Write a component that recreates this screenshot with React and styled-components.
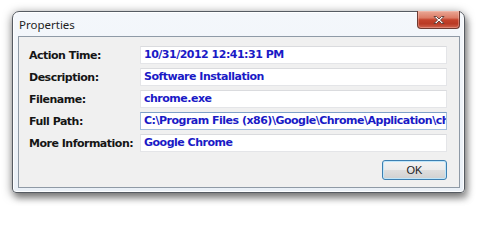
import React from "react";
import styled, { createGlobalStyle } from "styled-components";

const GlobalStyle = createGlobalStyle`
  html, body { margin: 0; padding: 0; background: #ffffff; }
`;

const Page = styled.div`
  width: 480px;
  height: 208px;
  padding: 11px 0 0 12px;
  box-sizing: border-box;
  background: #ffffff;
`;

const Window = styled.div`
  width: 453px;
  height: 182px;
  box-sizing: border-box;
  border: 1px solid #565b62;
  border-radius: 7px 7px 4px 4px;
  background: linear-gradient(#f4f7fb, #eaf0f7);
  box-shadow: inset 0 0 0 1px rgba(255, 255, 255, 0.9),
    0 2px 10px rgba(0, 0, 0, 0.5), 3px 6px 6px rgba(0, 0, 0, 0.25);
  display: flex;
  flex-direction: column;
`;

const TitleBar = styled.div`
  height: 25px;
  display: flex;
  align-items: center;
  padding-left: 6px;
`;

const Title = styled.span`
  flex: 1;
  font-family: "Noto Sans", "Open Sans", sans-serif;
  font-size: 11.5px;
  color: #1e1e1e;
  margin-top: 1px;
`;

const CloseButton = styled.div`
  align-self: flex-start;
  margin-top: -1px;
  margin-right: 4px;
  width: 43px;
  height: 18px;
  box-sizing: border-box;
  border: 1px solid #6e3a31;
  border-top: none;
  border-radius: 0 0 4px 4px;
  background: linear-gradient(
    #eaa896 0%,
    #dc7c66 40%,
    #c4432c 52%,
    #b93a24 75%,
    #d06550 100%
  );
  box-shadow: inset 0 0 0 1px rgba(255, 210, 200, 0.35);
  display: flex;
  align-items: center;
  justify-content: center;
`;

const Client = styled.div`
  flex: 1;
  margin: 0 4px 4px 5px;
  border: 1px solid #8f9aa6;
  background: #f0f0f0;
  padding: 9px 12px 7px 10px;
  display: flex;
  flex-direction: column;
`;

const Form = styled.div`
  display: grid;
  grid-template-columns: 111px 307px;
  grid-auto-rows: 18px;
  row-gap: 4px;
`;

const Label = styled.div`
  align-self: center;
  font-family: "DejaVu Sans", "Liberation Sans", sans-serif;
  font-weight: bold;
  font-size: 11px;
  letter-spacing: -0.5px;
  color: #151515;
  white-space: nowrap;
`;

const Field = styled.div`
  box-sizing: border-box;
  height: 18px;
  background: #ffffff;
  border: 1px solid ${(p) => (p.$focused ? "#a4bfdc" : "#e4e5e8")};
  border-top-color: ${(p) => (p.$focused ? "#7fa0c6" : "#dadbde")};
  padding: 0 3px;
  font-family: "DejaVu Sans", "Liberation Sans", sans-serif;
  font-weight: bold;
  font-size: 11px;
  letter-spacing: -0.5px;
  line-height: 16px;
  color: #1a1ac6;
  white-space: nowrap;
  overflow: hidden;
`;

const Footer = styled.div`
  margin-top: 8px;
  display: flex;
  justify-content: flex-end;
`;

const OkButton = styled.div`
  width: 65px;
  height: 20px;
  box-sizing: border-box;
  border: 1px solid #3c7fb1;
  border-radius: 3px;
  background: linear-gradient(#f3f3f3 0%, #ececec 48%, #dedede 52%, #d0d0d0 100%);
  box-shadow: inset 0 0 0 1px #bfe6fa;
  display: flex;
  align-items: center;
  justify-content: center;
  font-family: "Liberation Sans", "DejaVu Sans", sans-serif;
  font-size: 11px;
  color: #222;
`;

const rows = [
  { label: "Action Time:", value: "10/31/2012 12:41:31 PM" },
  { label: "Description:", value: "Software Installation" },
  { label: "Filename:", value: "chrome.exe" },
  {
    label: "Full Path:",
    value: "C:\\Program Files (x86)\\Google\\Chrome\\Application\\chrome.exe",
    focused: true,
  },
  { label: "More Information:", value: "Google Chrome" },
];

function CloseIcon() {
  return (
    <svg width="12" height="10" viewBox="0 0 12 10">
      <path
        d="M1 1.5 L3.5 1.5 L6 4 L8.5 1.5 L11 1.5 L7.5 5 L11 8.5 L8.5 8.5 L6 6 L3.5 8.5 L1 8.5 L4.5 5 Z"
        fill="#ffffff"
        stroke="#5a3a36"
        strokeWidth="0.9"
        strokeLinejoin="round"
      />
    </svg>
  );
}

export default function App() {
  return (
    <>
      <GlobalStyle />
      <Page>
        <Window>
          <TitleBar>
            <Title>Properties</Title>
            <CloseButton>
              <CloseIcon />
            </CloseButton>
          </TitleBar>
          <Client>
            <Form>
              {rows.map((r) => (
                <React.Fragment key={r.label}>
                  <Label>{r.label}</Label>
                  <Field $focused={r.focused}>{r.value}</Field>
                </React.Fragment>
              ))}
            </Form>
            <Footer>
              <OkButton>OK</OkButton>
            </Footer>
          </Client>
        </Window>
      </Page>
    </>
  );
}
